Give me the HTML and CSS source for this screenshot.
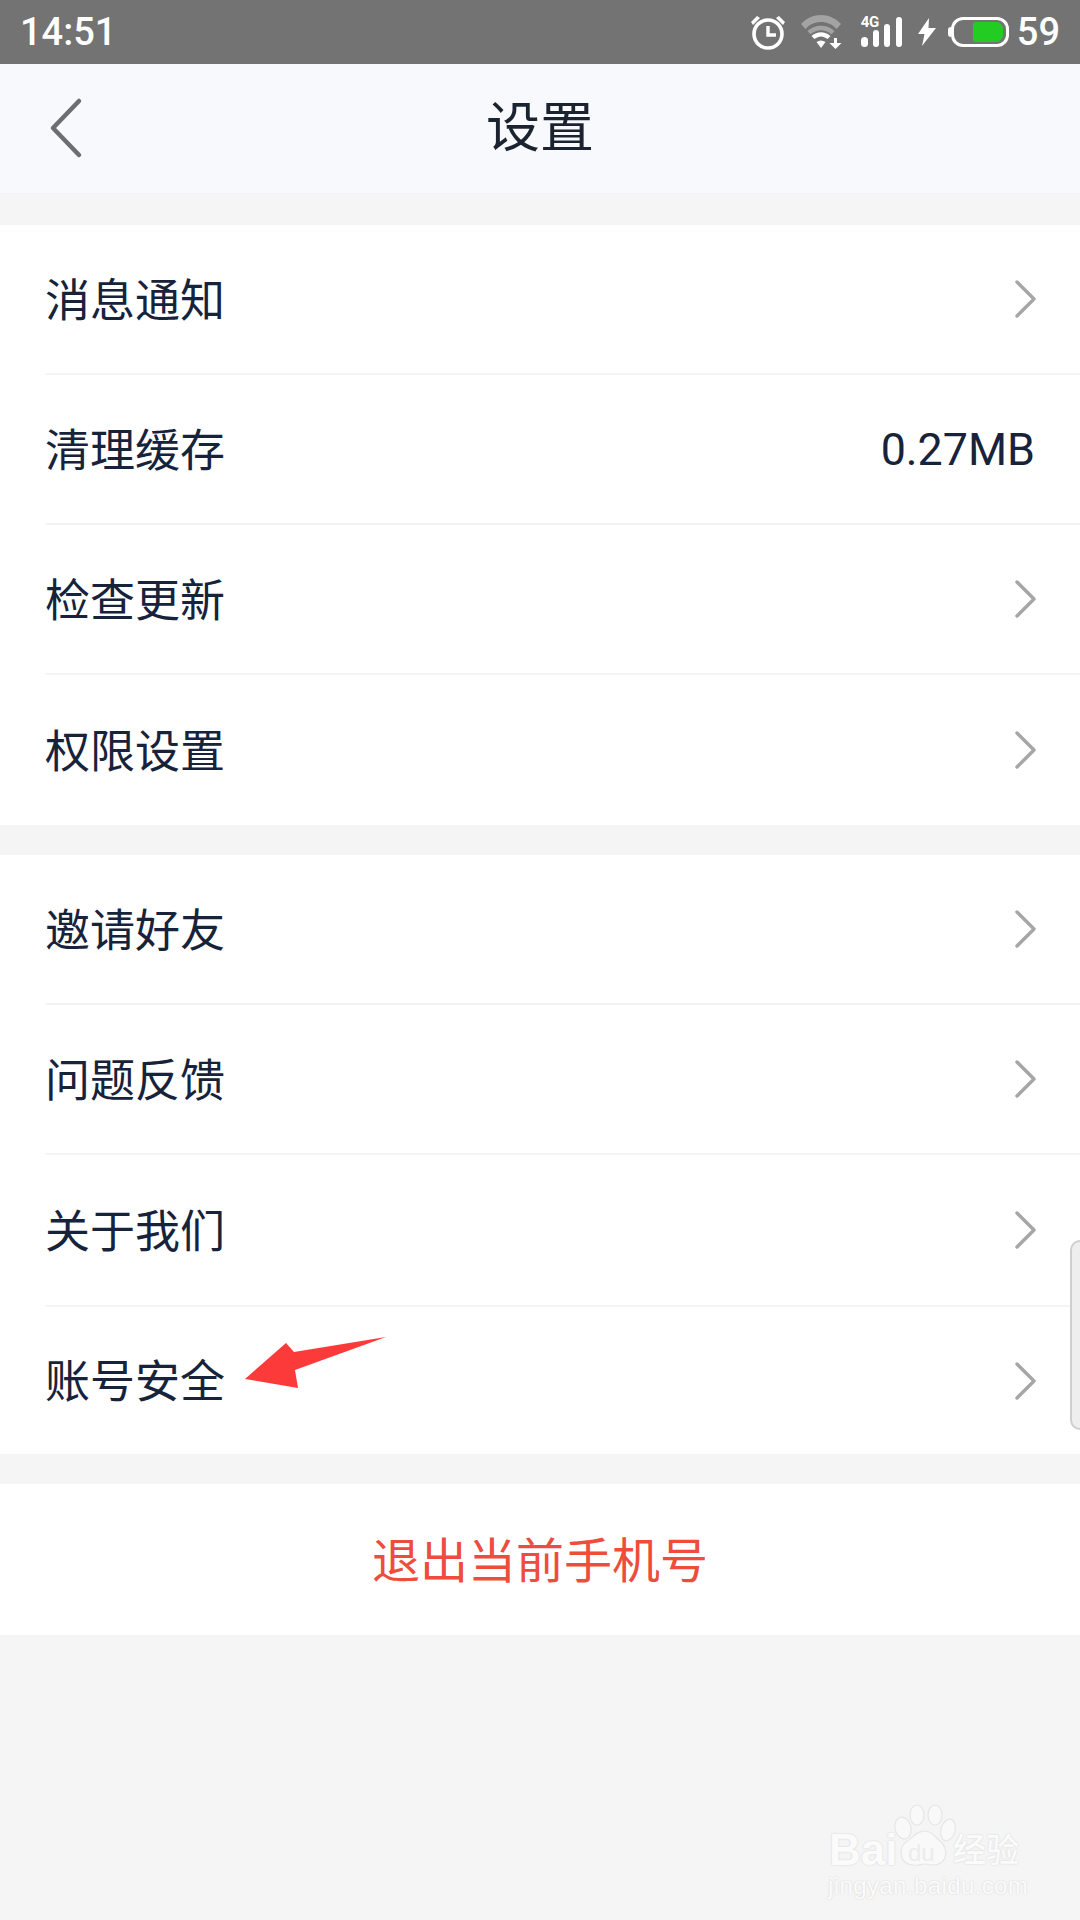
FILE: index.html
```html
<!DOCTYPE html>
<html lang="zh-CN">
<head>
<meta charset="utf-8">
<title>设置</title>
<link rel="stylesheet" href="styles.css">
</head>
<body>
<div class="page">
  <div class="statusbar">
    <span class="time">14:51</span>
    <div class="status-icons">
      <svg class="ic-alarm" viewBox="0 0 36 36" width="36" height="36"><circle cx="18" cy="20" r="14" fill="none" stroke="#fff" stroke-width="3.6"/><path d="M18 12v9h8" fill="none" stroke="#fff" stroke-width="3.4"/><path d="M1 8l6-6 3 2-7 7zM35 8l-6-6-3 2 7 7z" fill="#fff"/></svg>
      <svg class="ic-wifi" viewBox="0 0 42 34" width="42" height="34"><path d="M0 9C11-3 29-3 40 9l-4.500 5C31 9 26 7 20 7S9 9 4.500 14z" fill="#a3a3a3"/><path d="M6.500 16C14 9 26 9 33.500 16l-3 3.200C24 14 16 14 9.500 19.200z" fill="#a3a3a3"/><path d="M10.500 21c6-5 13-5 19 0l-3 3c-4.500-3.500-8.500-3.500-13 0z" fill="#fff"/><path d="M15.500 27c3-2 6-2 9 0L20 33z" fill="#fff"/><path d="M33 23h3v5h4.500L34.500 34l-6-6H33z" fill="#fff"/></svg>
      <div class="signal">
        <span class="net">4G</span>
        <svg viewBox="0 0 42 30" width="42" height="30"><rect x="0" y="20" width="7" height="10" rx="3.500" fill="#fff"/><rect x="12" y="13" width="6" height="17" rx="3" fill="#fff"/><rect x="23" y="7" width="6" height="23" rx="3" fill="#fff"/><rect x="35" y="0" width="6" height="30" rx="3" fill="#fff"/></svg>
      </div>
      <svg class="ic-bolt" viewBox="0 0 18 28" width="18" height="28"><path d="M11 0L0 16h6.500L4 28 18 10h-7.500z" fill="#fff"/></svg>
      <div class="battery"><span class="battery-tip"></span><div class="battery-body"><span class="battery-fill"></span></div></div>
      <span class="level">59</span>
    </div>
  </div>

  <header class="topbar">
    <svg class="back" viewBox="0 0 34 62" width="34" height="62"><path d="M30 4L4 31l26 27" fill="none" stroke="#6d6e71" stroke-width="4.500" stroke-linecap="round" stroke-linejoin="round"/></svg>
    <h1 class="title">设置</h1>
  </header>

  <section class="group first">
    <div class="row"><span class="label">消息通知</span><svg class="chev" viewBox="0 0 22 38" width="22" height="38"><path d="M2 2l17 17L2 36" fill="none" stroke="#a6a6a6" stroke-width="3.400" stroke-linecap="round" stroke-linejoin="round"/></svg></div>
    <div class="row"><span class="label">清理缓存</span><span class="value">0.27MB</span></div>
    <div class="row"><span class="label">检查更新</span><svg class="chev" viewBox="0 0 22 38" width="22" height="38"><path d="M2 2l17 17L2 36" fill="none" stroke="#a6a6a6" stroke-width="3.400" stroke-linecap="round" stroke-linejoin="round"/></svg></div>
    <div class="row"><span class="label">权限设置</span><svg class="chev" viewBox="0 0 22 38" width="22" height="38"><path d="M2 2l17 17L2 36" fill="none" stroke="#a6a6a6" stroke-width="3.400" stroke-linecap="round" stroke-linejoin="round"/></svg></div>
  </section>

  <section class="group second">
    <div class="row"><span class="label">邀请好友</span><svg class="chev" viewBox="0 0 22 38" width="22" height="38"><path d="M2 2l17 17L2 36" fill="none" stroke="#a6a6a6" stroke-width="3.400" stroke-linecap="round" stroke-linejoin="round"/></svg></div>
    <div class="row"><span class="label">问题反馈</span><svg class="chev" viewBox="0 0 22 38" width="22" height="38"><path d="M2 2l17 17L2 36" fill="none" stroke="#a6a6a6" stroke-width="3.400" stroke-linecap="round" stroke-linejoin="round"/></svg></div>
    <div class="row tall"><span class="label">关于我们</span><svg class="chev" viewBox="0 0 22 38" width="22" height="38"><path d="M2 2l17 17L2 36" fill="none" stroke="#a6a6a6" stroke-width="3.400" stroke-linecap="round" stroke-linejoin="round"/></svg></div>
    <div class="row short"><span class="label">账号安全</span><svg class="chev" viewBox="0 0 22 38" width="22" height="38"><path d="M2 2l17 17L2 36" fill="none" stroke="#a6a6a6" stroke-width="3.400" stroke-linecap="round" stroke-linejoin="round"/></svg></div>
  </section>

  <section class="group logout"><span class="logout-text">退出当前手机号</span></section>

  <div class="side-handle"></div>

  <svg class="arrow" viewBox="0 0 142 54" width="142" height="54"><path d="M141 0L49 15 41 6 0 42l53 9-3-18z" fill="#fd3a3a"/></svg>

  <div class="watermark">
    <span class="wm-bai">Bai</span>
    <svg class="paw" viewBox="0 0 64 66" width="64" height="66"><g fill="#f9f9f9" stroke="#e6e6e6" stroke-width="1.200"><ellipse cx="11" cy="24" rx="8" ry="11" transform="rotate(-15 11 24)"/><ellipse cx="25" cy="11" rx="7" ry="10"/><ellipse cx="43" cy="11" rx="7" ry="10"/><ellipse cx="56" cy="26" rx="7" ry="11" transform="rotate(15 56 26)"/><path d="M33 27c7 0 10 6 15 10 9 7 8 24-7 24-3 0-5-1-8-1-4 0-7 2-12 1C7 60 6 44 14 38c7-4 10-11 19-11z"/></g></svg>
    <span class="wm-du">du</span>
    <span class="wm-cn">经验</span>
    <span class="wm-url">jingyan.baidu.com</span>
  </div>
</div>
</body>
</html>
```
FILE: styles.css
```css
* { box-sizing: border-box; }
html, body { margin: 0; padding: 0; }
body { width: 1080px; height: 1920px; overflow: hidden; background: #f5f5f5; font-family: "Noto Sans CJK SC", "Noto Sans", sans-serif; }
.page { position: relative; width: 1080px; height: 1920px; display: flex; flex-direction: column; }

.statusbar { height: 64px; background: #737373; display: flex; align-items: center; justify-content: space-between; padding: 0 20px; color: #fff; font-family: Roboto, sans-serif; }
.time { font-size: 38px; font-weight: 500; }
.status-icons { display: flex; align-items: center; }
.ic-alarm { margin-right: 15px; }
.ic-wifi { margin-right: 18px; }
.signal { position: relative; width: 42px; height: 30px; margin-right: 15px; }
.signal svg { position: absolute; left: 0; top: 0; }
.net { position: absolute; left: 0; top: -2px; font-size: 15px; font-weight: 700; line-height: 15px; letter-spacing: -0.5px; }
.ic-bolt { margin-right: 12px; }
.battery { display: flex; align-items: center; margin-right: 8px; }
.battery-tip { width: 3px; height: 10px; background: #fff; border-radius: 4px 0 0 4px; }
.battery-body { width: 58px; height: 30px; border: 3px solid #fff; border-radius: 12px; display: flex; justify-content: flex-end; padding: 2px 3px; }
.battery-fill { width: 30px; height: 100%; background: #22cc22; border-radius: 3px 7px 7px 3px; }
.level { font-size: 38px; font-weight: 500; }

.topbar { position: relative; height: 131px; background: #f7f9fd; border-bottom: 2px solid #f4f4f7; display: flex; align-items: center; justify-content: center; }
.back { position: absolute; left: 49px; top: 33px; }
.title { margin: 0; padding-bottom: 10px; font-size: 54px; font-weight: 400; color: #1c2330; line-height: 1; }

.group { background: #fff; }
.group.first { margin-top: 30px; }
.group.second { margin-top: 30px; }
.row { height: 150px; margin-left: 45px; padding-right: 43px; display: flex; align-items: center; justify-content: space-between; border-bottom: 2px solid #f4f4f4; }
.row:last-child { border-bottom: 0; }
.row.tall { height: 152px; }
.row.short { height: 147px; }
.label { font-size: 45px; color: #17233a; line-height: 1; padding-bottom: 4px; }
.value { font-family: Roboto, sans-serif; font-size: 44.800px; color: #17233a; padding-right: 2px; padding-top: 1px; }
.chev { display: block; }

.logout { height: 151px; margin-top: 30px; display: flex; align-items: center; justify-content: center; }
.logout-text { font-size: 48px; line-height: 1; padding-bottom: 6px; color: #ee4d3d; }

.side-handle { position: absolute; left: 1070px; top: 1240px; width: 14px; height: 190px; background: #eeeeee; border: 2px solid #cfcfcf; border-radius: 10px 0 0 10px; }
.arrow { position: absolute; left: 245px; top: 1337px; }

.watermark { position: absolute; left: 828px; top: 1800px; width: 200px; height: 110px; color: #fbfbfb; text-shadow: 0 0 2px #cfcfcf; white-space: nowrap; }
.paw { position: absolute; left: 64px; top: 4px; }
.wm-bai { position: absolute; left: 1px; top: 25px; font-family: "Liberation Sans", sans-serif; font-weight: 700; font-size: 44px; line-height: 50px; }
.wm-du { position: absolute; left: 80px; top: 40px; font-family: "Liberation Sans", sans-serif; font-size: 24px; line-height: 26px; color: #ececec; text-shadow: none; }
.wm-cn { position: absolute; left: 125px; top: 24px; font-size: 33px; font-weight: 500; line-height: 48px; }
.wm-url { position: absolute; left: 0; top: 72px; font-family: "Liberation Sans", sans-serif; font-size: 24px; line-height: 28px; letter-spacing: 0.4px; }
```
